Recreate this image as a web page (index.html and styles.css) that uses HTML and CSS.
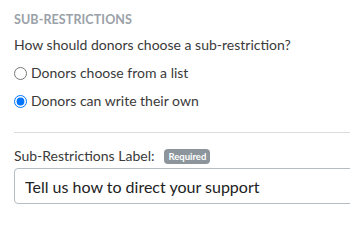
FILE: index.html
```html
<!DOCTYPE html>
<html>
<head>
<meta charset="utf-8">
<link rel="stylesheet" href="styles.css">
</head>
<body>
<div class="frame">
  <div class="panel">
    <h3 class="heading">SUB-RESTRICTIONS</h3>
    <p class="question">How should donors choose a sub-restriction?</p>
    <label class="option"><input type="radio" name="choice" class="radio"> <span>Donors choose from a list</span></label>
    <label class="option"><input type="radio" name="choice" class="radio" checked> <span>Donors can write their own</span></label>
    <hr class="divider">
    <div class="field-label">
      <span>Sub-Restrictions Label:</span>
      <span class="badge">Required</span>
    </div>
    <input class="text-input" type="text" value="Tell us how to direct your support">
  </div>
</div>
</body>
</html>
```
FILE: styles.css
```css
html, body {
  margin: 0;
  padding: 0;
  background: #ffffff;
}
body {
  font-family: "Lato", "Liberation Sans", sans-serif;
  color: #3a3a3a;
}
.frame {
  width: 350px;
  height: 222px;
  overflow: hidden;
}
.panel {
  padding: 12px 0 0 14px;
  width: 380px;
}
.heading {
  margin: 0;
  font-size: 12.5px;
  font-weight: 700;
  color: #9aa1a8;
  letter-spacing: 0.1px;
  line-height: 16px;
}
.question {
  margin: 8px 0 0;
  font-size: 14px;
  line-height: 18px;
}
.option {
  display: flex;
  align-items: center;
  gap: 4px;
  font-size: 14px;
  line-height: 18px;
  margin-top: 10px;
}
.radio {
  margin: 0;
  width: 13px;
  height: 13px;
}
.divider {
  border: 0;
  border-top: 1px solid #dcdcdc;
  margin: 22px 0 0;
}
.field-label {
  display: flex;
  align-items: center;
  gap: 10px;
  margin-top: 14px;
  font-size: 14px;
  line-height: 18px;
}
.badge {
  background: #8d959c;
  color: #ffffff;
  font-size: 9.5px;
  font-weight: 700;
  border-radius: 4px;
  padding: 1px 4px;
  line-height: 13px;
}
.text-input {
  display: block;
  box-sizing: border-box;
  margin-top: 3px;
  width: 366px;
  height: 36px;
  border: 1px solid #b5bcc2;
  border-radius: 4px;
  padding: 0 10px;
  font-family: "Lato", "Liberation Sans", sans-serif;
  font-size: 16px;
  color: #222222;
}
```
